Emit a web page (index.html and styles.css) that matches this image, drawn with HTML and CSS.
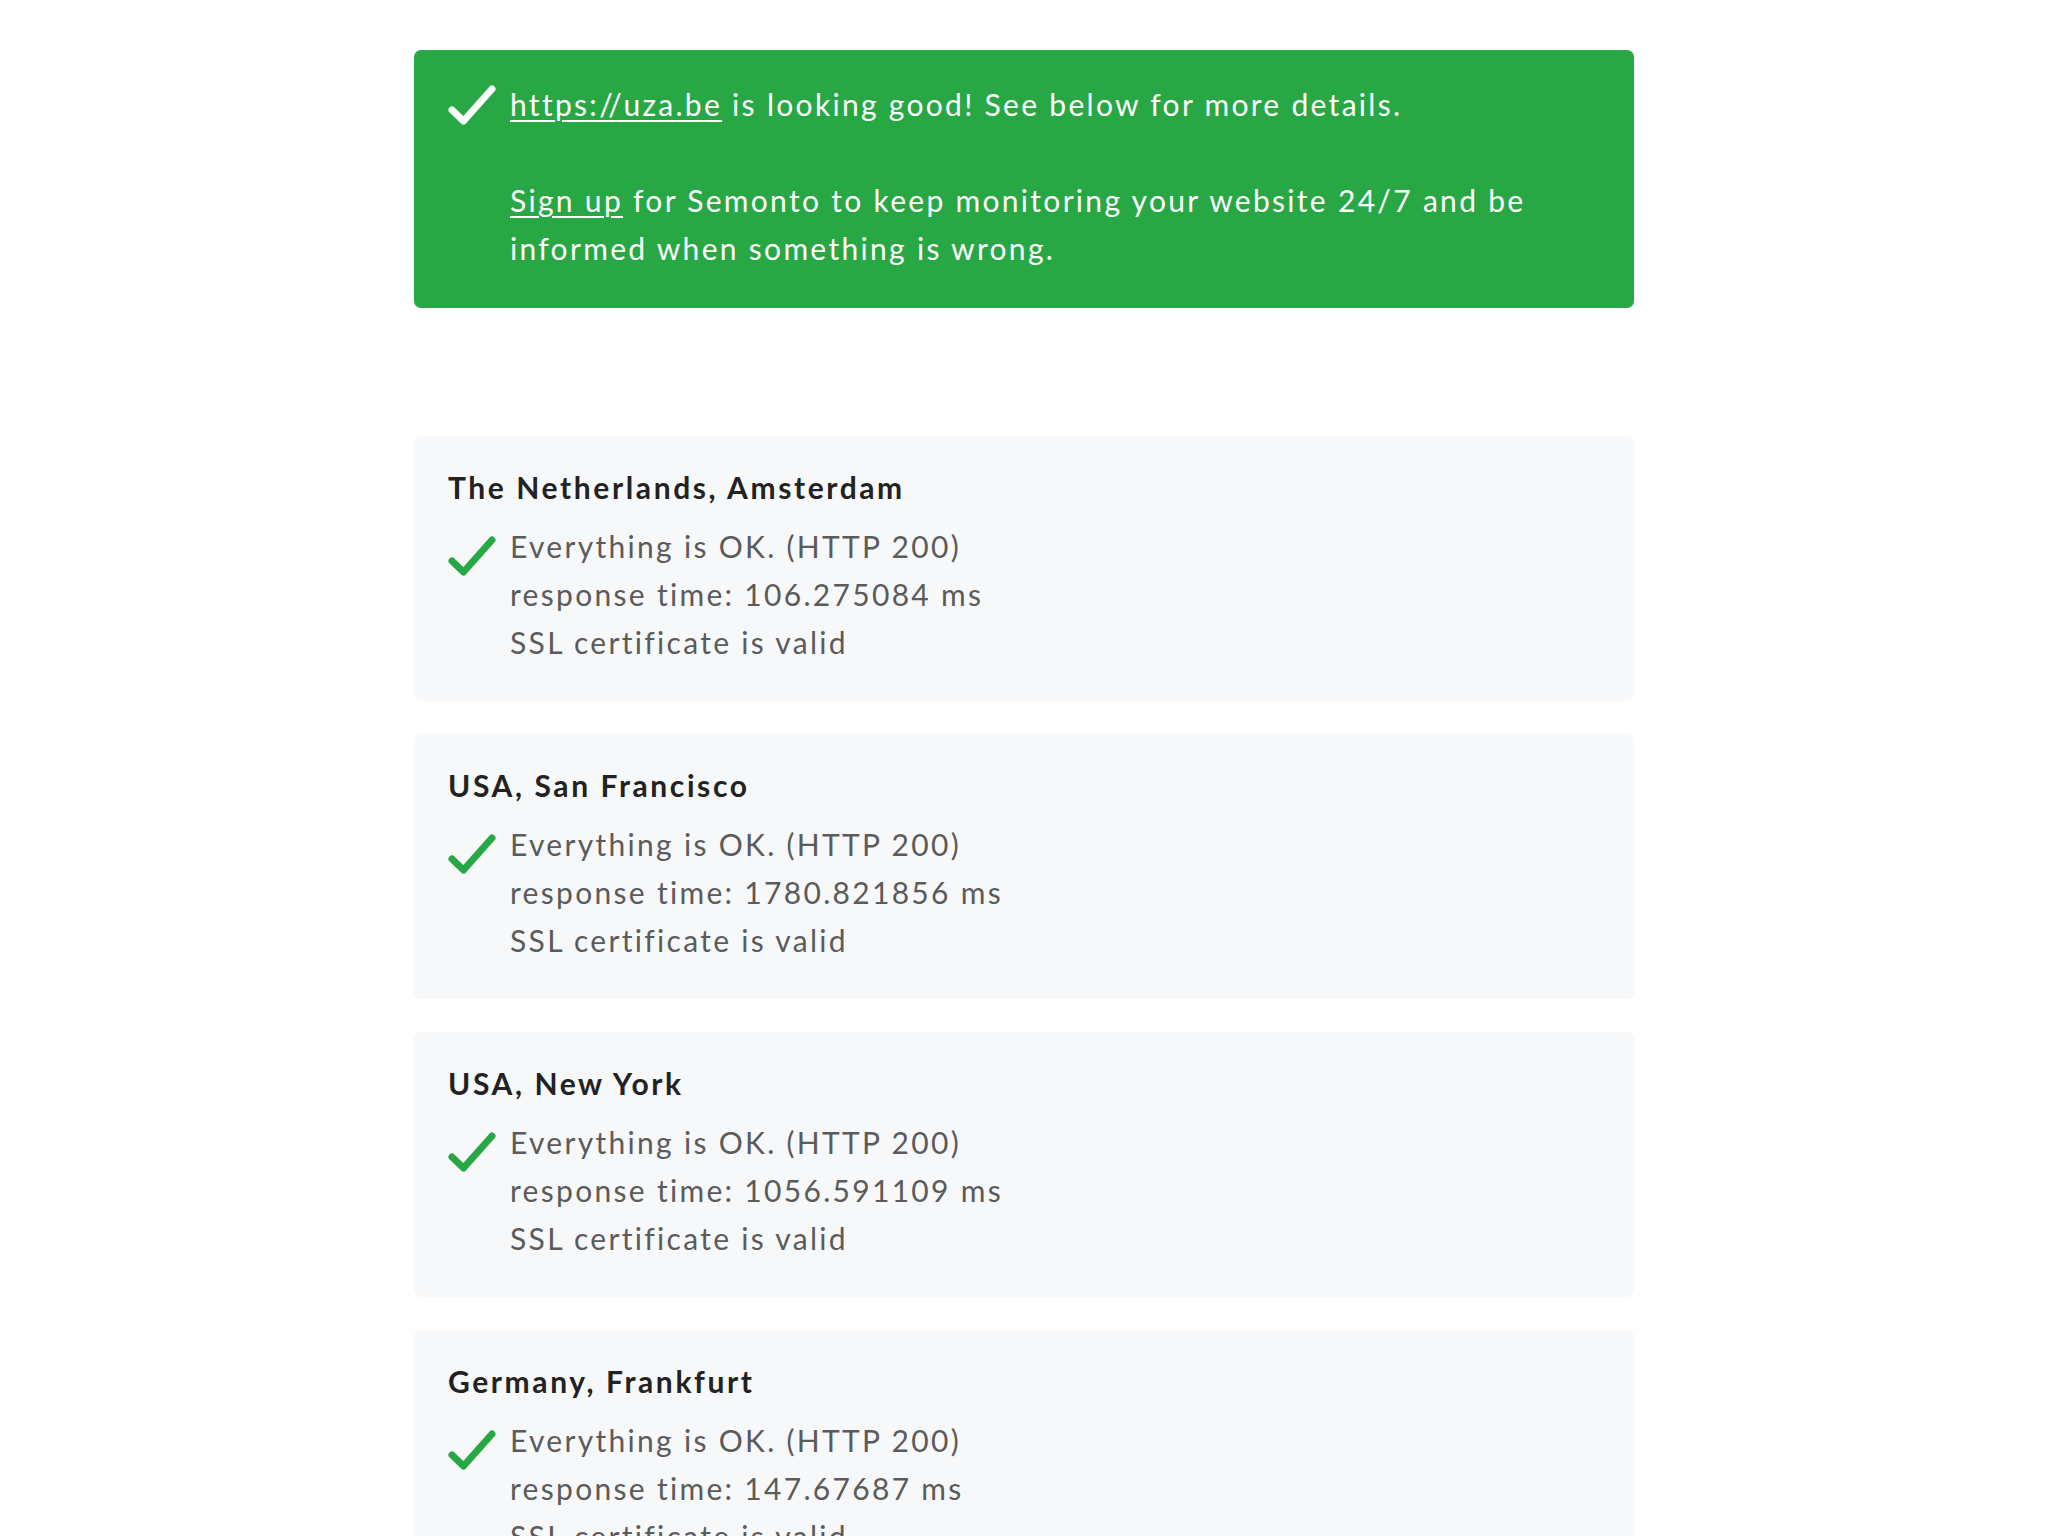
FILE: index.html
```html
<!DOCTYPE html>
<html lang="en">
<head>
<meta charset="utf-8">
<title>Semonto check</title>
<link rel="stylesheet" href="styles.css">
</head>
<body>
<main class="container">
  <section class="alert">
    <svg class="check check-white" viewBox="0 0 48 42" aria-hidden="true"><path d="M4 26 L15.5 37 L44 5"/></svg>
    <p class="alert-text"><a href="#">https://uza.be</a> is looking good! See below for more details.<br><br><a href="#">Sign up</a> for Semonto to keep monitoring your website 24/7 and be informed when something is wrong.</p>
  </section>

  <div class="results">
    <section class="card">
      <h2 class="card-title">The Netherlands, Amsterdam</h2>
      <div class="status">
        <svg class="check check-green" viewBox="0 0 48 42" aria-hidden="true"><path d="M4 26 L15.5 37 L44 5"/></svg>
        <div class="lines">
          <div>Everything is OK. (HTTP 200)</div>
          <div>response time: 106.275084 ms</div>
          <div>SSL certificate is valid</div>
        </div>
      </div>
    </section>

    <section class="card">
      <h2 class="card-title">USA, San Francisco</h2>
      <div class="status">
        <svg class="check check-green" viewBox="0 0 48 42" aria-hidden="true"><path d="M4 26 L15.5 37 L44 5"/></svg>
        <div class="lines">
          <div>Everything is OK. (HTTP 200)</div>
          <div>response time: 1780.821856 ms</div>
          <div>SSL certificate is valid</div>
        </div>
      </div>
    </section>

    <section class="card">
      <h2 class="card-title">USA, New York</h2>
      <div class="status">
        <svg class="check check-green" viewBox="0 0 48 42" aria-hidden="true"><path d="M4 26 L15.5 37 L44 5"/></svg>
        <div class="lines">
          <div>Everything is OK. (HTTP 200)</div>
          <div>response time: 1056.591109 ms</div>
          <div>SSL certificate is valid</div>
        </div>
      </div>
    </section>

    <section class="card">
      <h2 class="card-title">Germany, Frankfurt</h2>
      <div class="status">
        <svg class="check check-green" viewBox="0 0 48 42" aria-hidden="true"><path d="M4 26 L15.5 37 L44 5"/></svg>
        <div class="lines">
          <div>Everything is OK. (HTTP 200)</div>
          <div>response time: 147.67687 ms</div>
          <div>SSL certificate is valid</div>
        </div>
      </div>
    </section>
  </div>
</main>
</body>
</html>
```

FILE: styles.css
```css
html, body {
  margin: 0;
  padding: 0;
  background: #ffffff;
}

body {
  font-family: "Lato", "Noto Sans", sans-serif;
  font-size: 30px;
  line-height: 48px;
  letter-spacing: 2.3px;
  color: #5b5b5b;
}

.container {
  width: 1220px;
  margin: 0 auto;
  padding-top: 50px;
}

.alert {
  display: flex;
  gap: 14px;
  background: #28a745;
  border-radius: 7px;
  padding: 30px 34px 36px;
  color: #ffffff;
}

.alert-text {
  margin: 0;
  flex: 1;
}

.alert-text a {
  color: #ffffff;
  text-decoration: underline;
  text-underline-offset: 4px;
  text-decoration-thickness: 2px;
}

.check {
  flex: 0 0 48px;
  width: 48px;
  height: 42px;
  fill: none;
  stroke-width: 7;
  stroke-linecap: round;
  stroke-linejoin: round;
}

.check-white {
  stroke: #ffffff;
  margin-top: 4px;
}

.check-green {
  stroke: #28a745;
  margin-top: 13px;
}

.results {
  display: flex;
  flex-direction: column;
  gap: 33px;
  margin-top: 128px;
}

.card {
  background: #f7f8fa;
  border-radius: 7px;
  padding: 32px 34px 35px;
}

.card-title {
  margin: 0 0 16px;
  font-size: 30px;
  line-height: 38px;
  font-weight: 700;
  letter-spacing: 2.6px;
  color: #222222;
}

.status {
  display: flex;
  gap: 14px;
}

.lines {
  flex: 1;
}
```
